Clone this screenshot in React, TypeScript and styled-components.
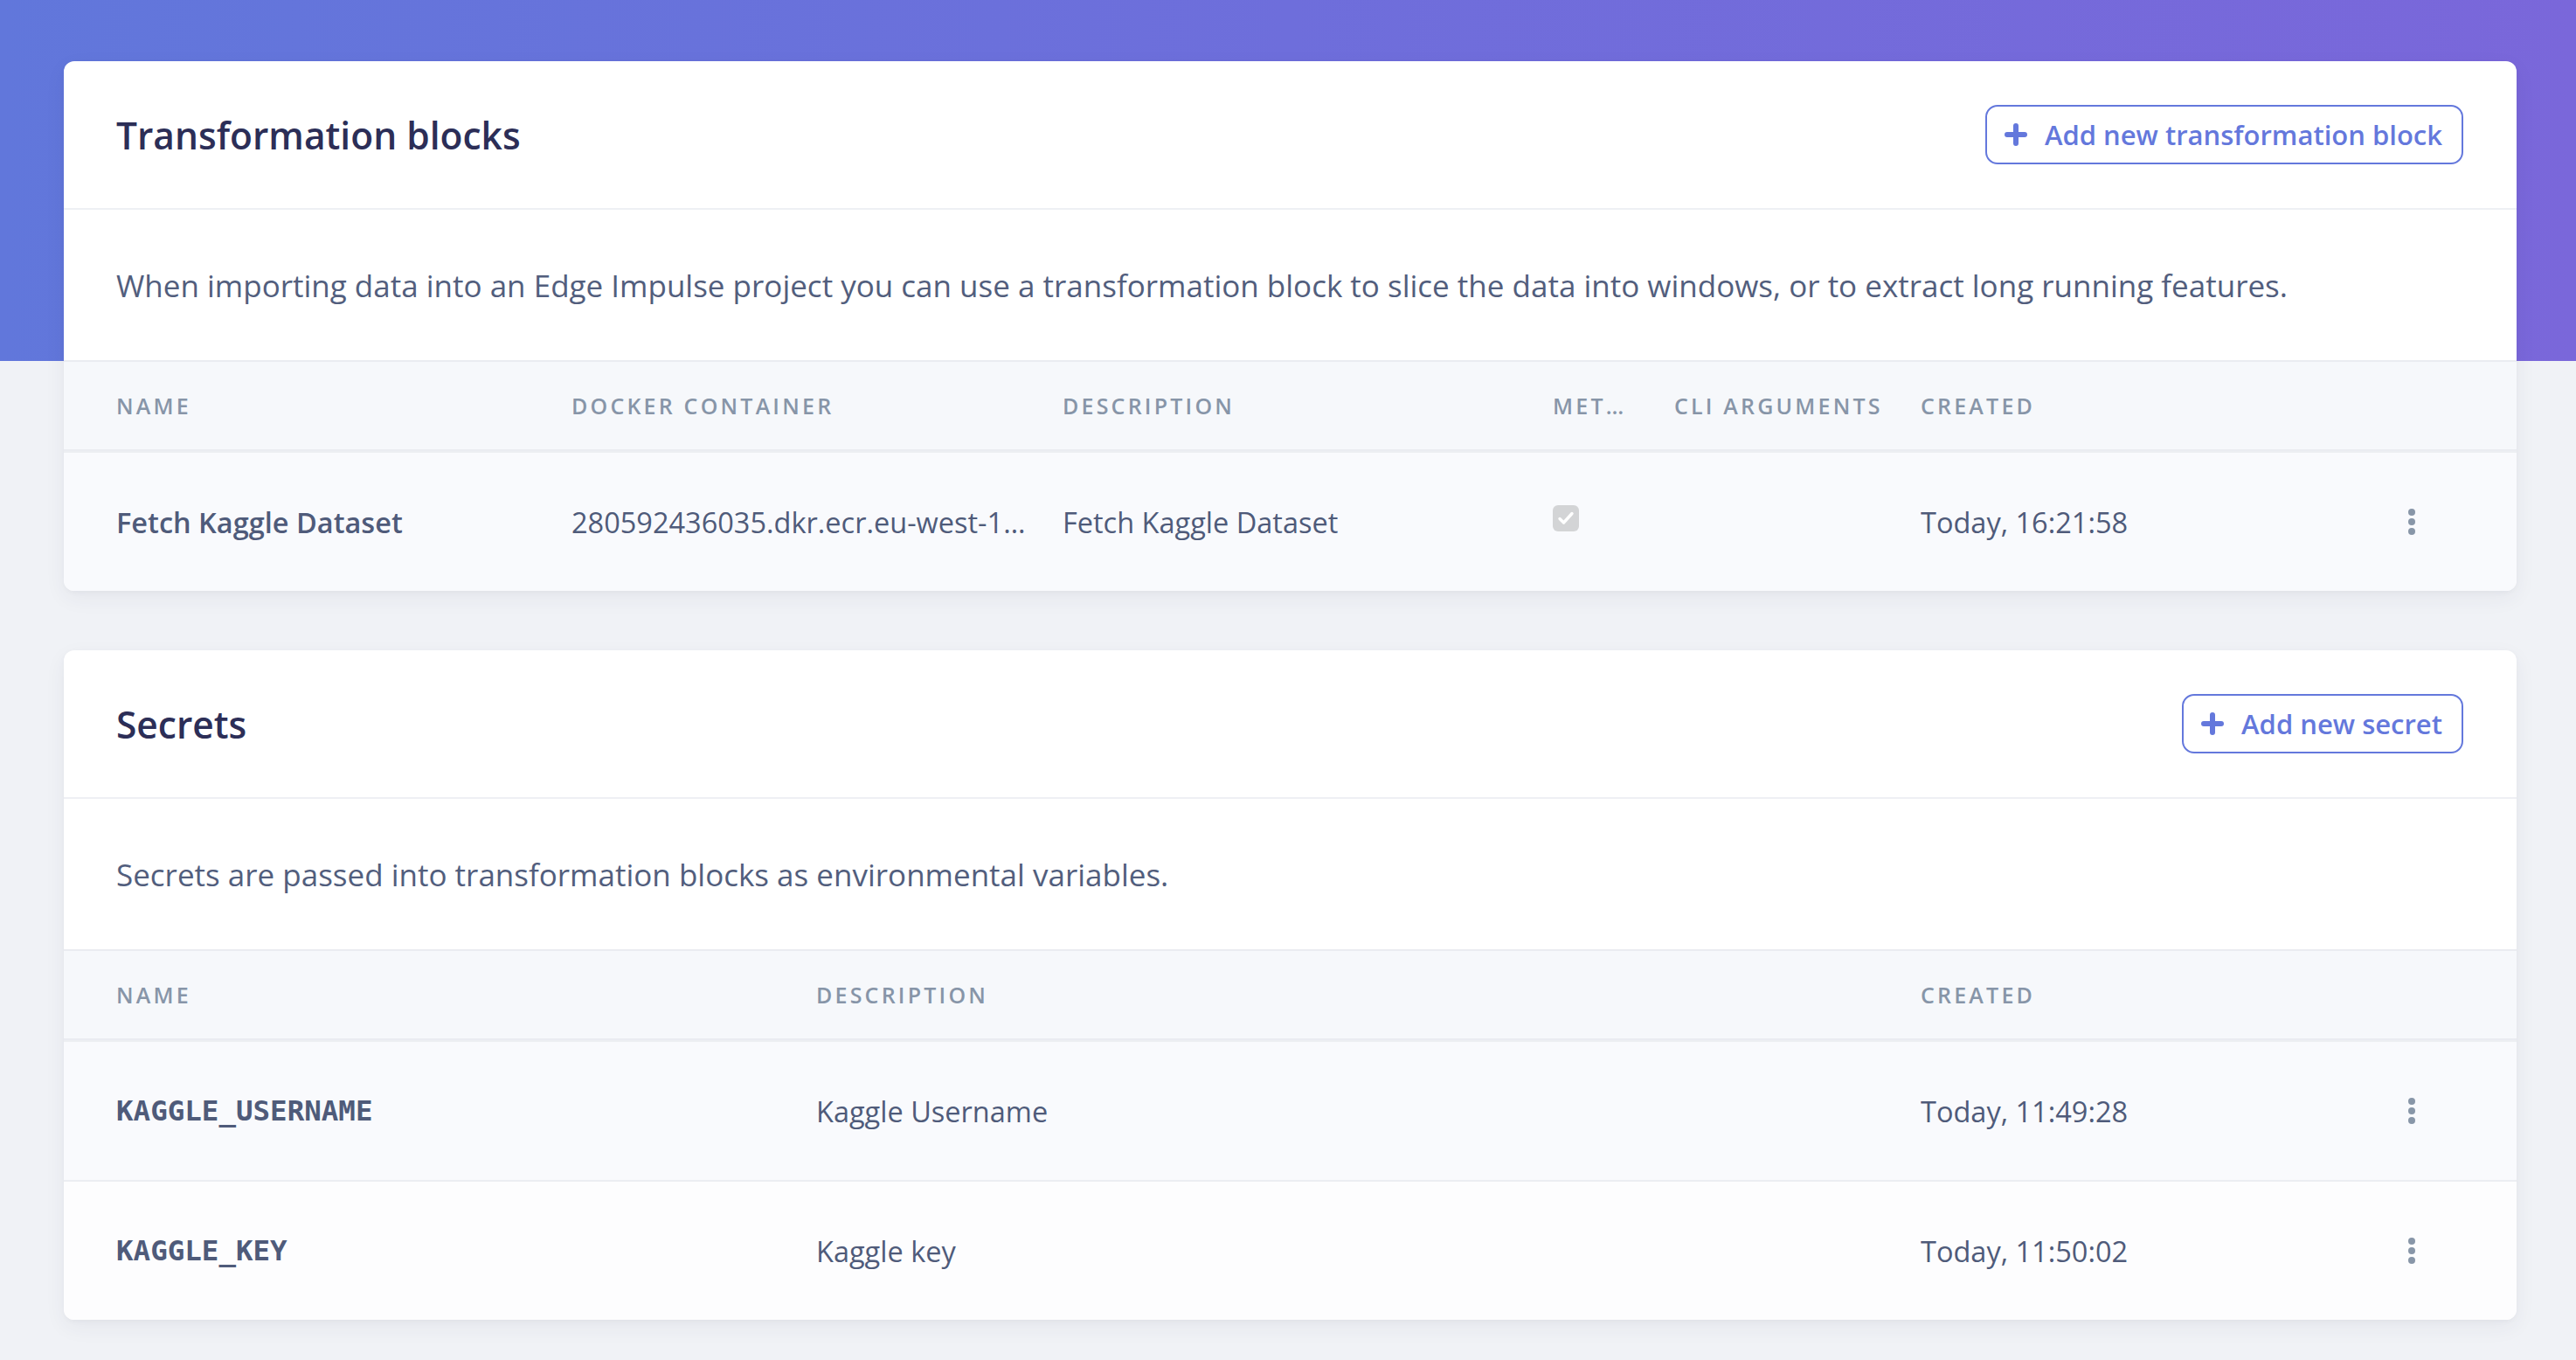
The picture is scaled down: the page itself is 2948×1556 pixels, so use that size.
import styled, { createGlobalStyle } from "styled-components";

const GlobalStyle = createGlobalStyle`
  body {
    margin: 0;
    background: #f0f2f6;
    font-family: "Open Sans", "Noto Sans", sans-serif;
  }
  * {
    box-sizing: border-box;
  }
`;

const Page = styled.div`
  min-height: 1556px;
  padding: 70px 68px 40px 73px;
  background:
    linear-gradient(90deg, #6177db 0%, #6e6edb 50%, #7a67da 100%) top / 100% 413px no-repeat,
    #f0f2f6;
  display: flex;
  flex-direction: column;
  gap: 68px;
`;

const Card = styled.section`
  background: #ffffff;
  border-radius: 12px;
  overflow: hidden;
  box-shadow: 0 8px 24px rgba(50, 50, 93, 0.06), 0 2px 6px rgba(0, 0, 0, 0.03);
`;

const CardHeader = styled.header`
  height: 170px;
  padding: 0 61px 0 60px;
  display: flex;
  align-items: center;
  justify-content: space-between;
  border-bottom: 2px solid #eef0f4;
`;

const Title = styled.h2`
  margin: 0;
  font-size: 42.5px;
  font-weight: 600;
  color: #2c2e57;
`;

const OutlineButton = styled.button`
  height: 68px;
  padding: 0 22px 0 20px;
  display: flex;
  align-items: center;
  gap: 20px;
  background: #ffffff;
  border: 2px solid #6478dc;
  border-radius: 14px;
  color: #6478dc;
  font-family: "Open Sans", sans-serif;
  font-size: 31px;
  font-weight: 600;
  cursor: pointer;
`;

const Intro = styled.div`
  height: 174px;
  padding: 0 60px;
  display: flex;
  align-items: center;
  border-bottom: 2px solid #eaecf1;
  font-size: 35px;
  color: #525e7d;
`;

const Row = styled.div<{ $cols: string; $head?: boolean; $alt?: boolean }>`
  display: grid;
  grid-template-columns: ${(p) => p.$cols};
  align-items: center;
  padding: 0 100px 0 60px;
  height: ${(p) => (p.$head ? "102px" : "160px")};
  background: ${(p) => (p.$head ? "#f6f8fb" : p.$alt ? "#fdfdfe" : "#f9fafd")};
  border-bottom: ${(p) => (p.$head ? "2px solid #eaecf1" : "none")};
  & + & {
    border-top: ${(p) => (p.$head ? "none" : "2px solid #eceef2")};
  }
`;

const HeadCell = styled.div`
  font-size: 25px;
  font-weight: 600;
  letter-spacing: 3.2px;
  text-transform: uppercase;
  color: #8795a8;
  white-space: nowrap;
  overflow: hidden;
  text-overflow: ellipsis;
  padding-right: 42px;
`;

const Cell = styled.div<{ $strong?: boolean; $mono?: boolean }>`
  font-family: ${(p) =>
    p.$mono ? '"DejaVu Sans Mono", "Liberation Mono", monospace' : '"Open Sans", sans-serif'};
  font-size: 32.5px;
  font-weight: ${(p) => (p.$mono ? 700 : p.$strong ? 600 : 400)};
  color: #4f5b7a;
  white-space: nowrap;
  overflow: hidden;
  text-overflow: ellipsis;
  padding-right: 40px;
`;

const CheckBox = styled.span`
  width: 30px;
  height: 30px;
  border-radius: 6px;
  background: #d3d4d6;
  display: flex;
  align-items: center;
  justify-content: center;
  margin-top: -8px;
`;

const MenuCell = styled.div`
  display: flex;
  justify-content: center;
`;

const PlusIcon = () => (
  <svg width="26" height="26" viewBox="0 0 26 26">
    <path d="M13 3v20M3 13h20" stroke="#6478dc" strokeWidth="6" strokeLinecap="round" />
  </svg>
);

const Kebab = () => (
  <svg width="10" height="32" viewBox="0 0 10 32">
    <circle cx="5" cy="5" r="4" fill="#8896a8" />
    <circle cx="5" cy="16" r="4" fill="#8896a8" />
    <circle cx="5" cy="27" r="4" fill="#8896a8" />
  </svg>
);

const Check = () => (
  <CheckBox>
    <svg width="20" height="18" viewBox="0 0 20 18">
      <path d="M3 9.5l4.5 4.5L17 3.5" fill="none" stroke="#fff" strokeWidth="3.4" strokeLinecap="round" strokeLinejoin="round" />
    </svg>
  </CheckBox>
);

const blockCols = "521px 562px 561px 139px 282px 1fr 40px";
const secretCols = "801px 1264px 1fr 40px";

const secrets = [
  { name: "KAGGLE_USERNAME", description: "Kaggle Username", created: "Today, 11:49:28" },
  { name: "KAGGLE_KEY", description: "Kaggle key", created: "Today, 11:50:02" },
];

export default function App() {
  return (
    <>
      <GlobalStyle />
      <Page>
        <Card>
          <CardHeader>
            <Title>Transformation blocks</Title>
            <OutlineButton>
              <PlusIcon />
              Add new transformation block
            </OutlineButton>
          </CardHeader>
          <Intro>
            When importing data into an Edge Impulse project you can use a transformation block to slice the data into windows, or to extract long running features.
          </Intro>
          <Row $cols={blockCols} $head>
            <HeadCell>Name</HeadCell>
            <HeadCell>Docker container</HeadCell>
            <HeadCell>Description</HeadCell>
            <HeadCell>Metadata</HeadCell>
            <HeadCell>CLI arguments</HeadCell>
            <HeadCell>Created</HeadCell>
            <div />
          </Row>
          <Row $cols={blockCols}>
            <Cell $strong>Fetch Kaggle Dataset</Cell>
            <Cell>280592436035.dkr.ecr.eu-west-1.amazonaws.com/fetch-kaggle-dataset</Cell>
            <Cell>Fetch Kaggle Dataset</Cell>
            <div>
              <Check />
            </div>
            <Cell />
            <Cell>Today, 16:21:58</Cell>
            <MenuCell>
              <Kebab />
            </MenuCell>
          </Row>
        </Card>

        <Card>
          <CardHeader>
            <Title>Secrets</Title>
            <OutlineButton>
              <PlusIcon />
              Add new secret
            </OutlineButton>
          </CardHeader>
          <Intro>Secrets are passed into transformation blocks as environmental variables.</Intro>
          <Row $cols={secretCols} $head>
            <HeadCell>Name</HeadCell>
            <HeadCell>Description</HeadCell>
            <HeadCell>Created</HeadCell>
            <div />
          </Row>
          {secrets.map((s, i) => (
            <Row key={s.name} $cols={secretCols} $alt={i % 2 === 1}>
              <Cell $mono>{s.name}</Cell>
              <Cell>{s.description}</Cell>
              <Cell>{s.created}</Cell>
              <MenuCell>
                <Kebab />
              </MenuCell>
            </Row>
          ))}
        </Card>
      </Page>
    </>
  );
}
